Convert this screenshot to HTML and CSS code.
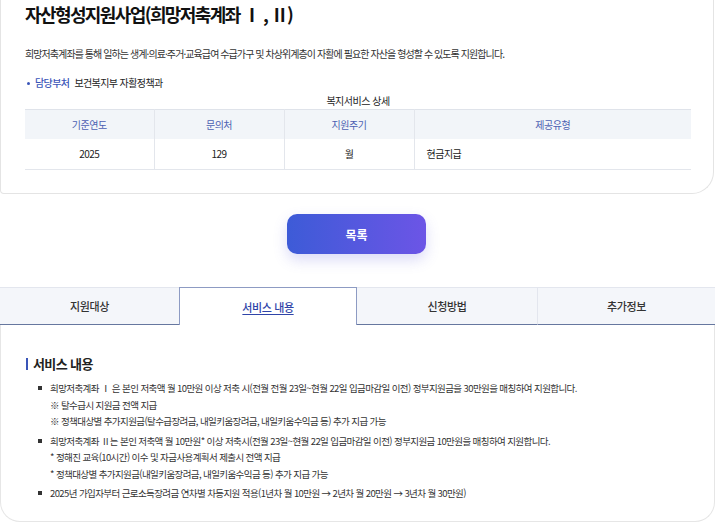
FILE: index.html
```html
<!DOCTYPE html>
<html lang="ko">
<head>
<meta charset="utf-8">
<link rel="stylesheet" href="styles.css">
</head>
<body>
<div class="wrap">
  <section class="card">
    <h1 class="title">자산형성지원사업(희망저축계좌 Ⅰ , Ⅱ)</h1>
    <p class="desc">희망저축계좌를 통해 일하는 생계·의료·주거·교육급여 수급가구 및 차상위계층이 자활에 필요한 자산을 형성할 수 있도록 지원합니다.</p>
    <div class="dept"><span class="dot"></span><span class="dept-label">담당부처</span><span class="dept-value">보건복지부 자활정책과</span></div>
    <table class="info">
      <caption>복지서비스 상세</caption>
      <thead>
        <tr><th class="c1">기준연도</th><th class="c2">문의처</th><th class="c3">지원주기</th><th class="c4">제공유형</th></tr>
      </thead>
      <tbody>
        <tr><td>2025</td><td>129</td><td>월</td><td class="left">현금지급</td></tr>
      </tbody>
    </table>
  </section>

  <div class="btn-row"><button class="btn-list">목록</button></div>

  <nav class="tabs">
    <div class="tab">지원대상</div>
    <div class="tab active"><span>서비스 내용</span></div>
    <div class="tab">신청방법</div>
    <div class="tab">추가정보</div>
  </nav>

  <section class="content">
    <h2 class="sec-title">서비스 내용</h2>
    <ul class="items">
      <li>
        <p>희망저축계좌 Ⅰ 은 본인 저축액 월 10만원 이상 저축 시(전월 전월 23일~현월 22일 입금마감일 이전) 정부지원금을 30만원을 매칭하여 지원합니다.</p>
        <p>※ 탈수급시 지원금 전액 지급</p>
        <p>※ 정책대상별 추가지원금(탈수급장려금, 내일키움장려금, 내일키움수익금 등) 추가 지급 가능</p>
      </li>
      <li>
        <p>희망저축계좌 Ⅱ는 본인 저축액 월 10만원* 이상 저축시(전월 23일~현월 22일 입금마감일 이전) 정부지원금 10만원을 매칭하여 지원합니다.</p>
        <p>* 정해진 교육(10시간) 이수 및 자금사용계획서 제출시 전액 지급</p>
        <p>* 정책대상별 추가지원금(내일키움장려금, 내일키움수익금 등) 추가 지급 가능</p>
      </li>
      <li>
        <p>2025년 가입자부터 근로소득장려금 연차별 차등지원 적용(1년차 월 10만원 → 2년차 월 20만원 → 3년차 월 30만원)</p>
      </li>
    </ul>
  </section>
</div>
</body>
</html>
```

FILE: styles.css
```css
* { box-sizing: border-box; }
html, body { margin: 0; padding: 0; background: #fff; }
body {
  font-family: "Noto Sans CJK KR", "Noto Sans", sans-serif;
  color: #222;
  width: 720px;
  height: 522px;
  overflow: hidden;
}
.wrap { width: 715px; }

.card {
  border: 1px solid #e4e4e4;
  border-top: none;
  border-radius: 0 0 22px 4px;
  padding: 0 22px 23px 24px;
  margin-right: 1px;
}
.title {
  margin: 0;
  padding-top: 1px;
  font-size: 18px;
  line-height: 26px;
  font-weight: 700;
  letter-spacing: -1.6px;
  color: #111;
}
.desc {
  margin: 20px 0 0;
  font-size: 10px;
  line-height: 14px;
  letter-spacing: -0.92px;
  color: #333;
}
.dept {
  margin-top: 15px;
  display: flex;
  align-items: center;
  font-size: 10px;
  line-height: 14px;
  letter-spacing: -0.6px;
}
.dot { width: 3px; height: 3px; border-radius: 50%; background: #3a55b8; margin: 0 5px 0 2px; }
.dept-label { color: #3a55b8; font-weight: 500; margin-right: 5px; }
.dept-value { color: #222; }

.info {
  width: 100%;
  margin-top: 4px;
  border-collapse: collapse;
  font-size: 10px;
  letter-spacing: -0.5px;
}
.info caption {
  caption-side: top;
  font-size: 10px;
  line-height: 13px;
  padding-bottom: 2px;
  color: #222;
}
.info th, .info td {
  text-align: center;
  font-weight: 400;
  padding: 0;
}
.info thead tr { border-top: 1px solid #dfe3ea; }
.info th { background: #f2f5f9; color: #4c5fb2; height: 29px; }
.info th + th, .info td + td { border-left: 1px solid #e3e6ec; }
.info td { height: 31px; border-bottom: 1px solid #e3e6ec; color: #222; }
.info td.left { text-align: left; padding-left: 12px; }
.c1 { width: 129px; }
.c2 { width: 130px; }
.c3 { width: 130px; }

.btn-row { display: flex; justify-content: center; padding: 20px 0 0; margin-right: 2px; }
.btn-list {
  width: 139px;
  height: 40px;
  border: none;
  border-radius: 10px;
  background: linear-gradient(90deg, #3d5bd7 0%, #6c55e6 100%);
  color: #fff;
  font-family: "Noto Sans CJK KR", sans-serif;
  font-size: 12px;
  font-weight: 700;
  box-shadow: 0 6px 14px rgba(90, 90, 220, 0.22);
}

.tabs {
  margin-top: 33px;
  display: grid;
  grid-template-columns: 179px 178px 180px 178px;
  height: 38px;
}
.tab {
  display: flex;
  align-items: center;
  justify-content: center;
  background: #f4f6fa;
  border-top: 1px solid #e3e6ee;
  border-bottom: 1px solid #66779f;
  font-size: 11px;
  letter-spacing: -0.4px;
  color: #333;
  font-weight: 500;
}
.tab + .tab { border-left: 1px solid #e3e6ee; }
.tab.active {
  background: #fff;
  border: 1px solid #8d9bc3;
  border-bottom: none;
  color: #2f44a8;
}
.tab.active span { text-decoration: underline; text-underline-offset: 2px; }
.tab.active + .tab { border-left: none; }

.content {
  height: 197px;
  border: 1px solid #e6e6e6;
  border-top: none;
  border-radius: 0 0 20px 20px;
  padding: 30px 20px 0 25px;
}
.sec-title {
  margin: 0;
  display: flex;
  align-items: center;
  font-size: 13px;
  font-weight: 700;
  line-height: 18px;
  letter-spacing: -0.6px;
  color: #222;
}
.sec-title::before {
  content: "";
  width: 2px;
  height: 12px;
  background: #3a55b8;
  margin-right: 5px;
}
.items {
  list-style: none;
  margin: 7px 0 0;
  padding: 0 0 0 12px;
}
.items li {
  position: relative;
  padding-left: 12px;
  margin-bottom: 3px;
}
.items li::before {
  content: "";
  position: absolute;
  left: 0;
  top: 6px;
  width: 4px;
  height: 4px;
  background: #333;
}
.items p {
  margin: 0;
  font-size: 9.5px;
  line-height: 16.5px;
  letter-spacing: -0.6px;
  color: #333;
  white-space: nowrap;
}
```
